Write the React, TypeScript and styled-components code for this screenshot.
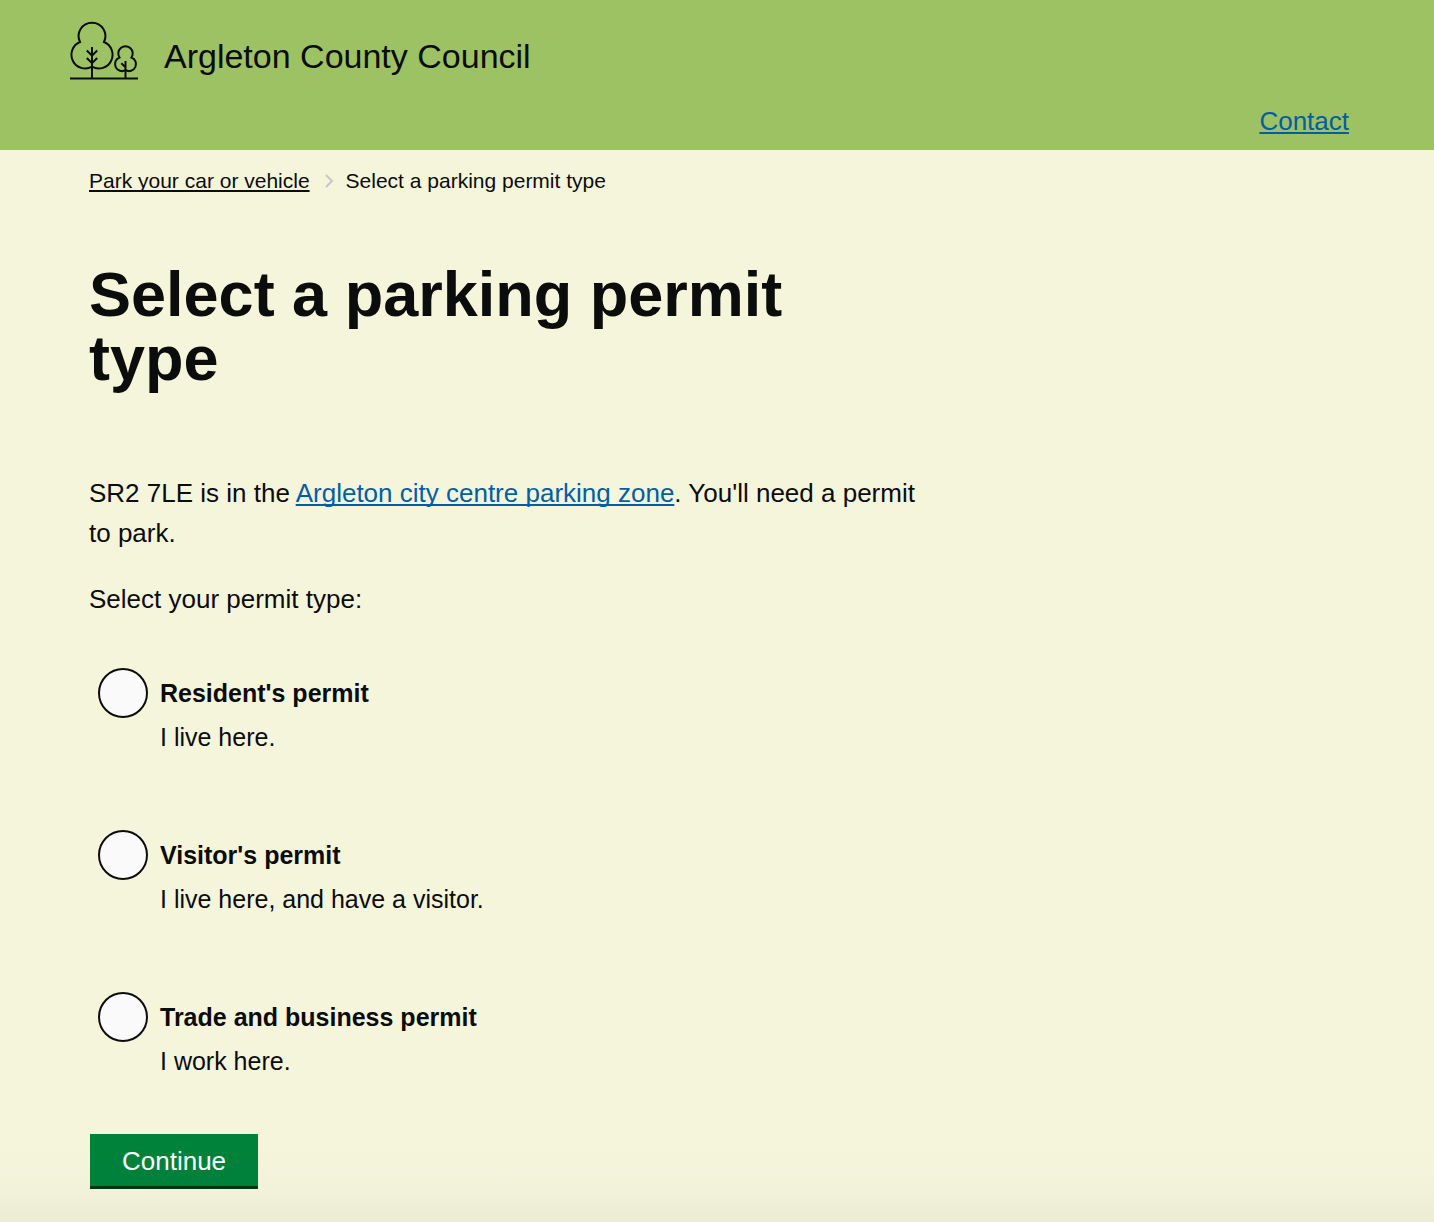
import React, { useState } from "react";
import styled, { createGlobalStyle } from "styled-components";

const GlobalStyle = createGlobalStyle`
  * { box-sizing: border-box; }
  body {
    margin: 0;
    background: #f5f5dc;
    color: #0b0c0c;
    font-family: "Helvetica Neue", "Liberation Sans", Arial, sans-serif;
    font-size: 26px;
    line-height: 40px;
  }
`;

const Page = styled.div`
  display: flex;
  flex-direction: column;
  min-height: 100vh;
`;

const Header = styled.header`
  display: flex;
  flex-direction: column;
  gap: 19px;
  padding: 20px 85px 9px 68px;
  background: #9dc264;
`;

const Brand = styled.a`
  display: flex;
  align-items: center;
  align-self: flex-start;
  gap: 24px;
  color: inherit;
  font-size: 34px;
  text-decoration: none;
`;

const BrandName = styled.span`
  padding-top: 10px;
`;

const Logo = styled.svg`
  display: block;
  width: 72px;
  height: 62px;
`;

const Nav = styled.nav`
  display: flex;
  justify-content: flex-end;
`;

const TextLink = styled.a<{ $plain?: boolean }>`
  color: ${(p) => (p.$plain ? "inherit" : "#005ea5")};
  text-decoration: underline;
  text-decoration-thickness: 2px;
  text-decoration-skip-ink: none;
  text-underline-offset: 2px;
`;

const Main = styled.main`
  flex: 1;
  padding: 16px 89px 32px;
`;

const Breadcrumbs = styled.ol`
  display: flex;
  align-items: center;
  gap: 12px;
  margin: 0;
  padding: 0;
  list-style: none;
  font-size: 21px;
  line-height: 30px;
`;

const Crumb = styled.li`
  display: flex;
  align-items: center;
  gap: 14px;
`;

const Chevron = styled.svg`
  display: block;
  width: 10px;
  height: 16px;
`;

const Title = styled.h1`
  max-width: 820px;
  margin: 66px 0 83px;
  font-size: 63px;
  font-weight: 700;
  line-height: 64px;
`;

const Paragraph = styled.p`
  max-width: 836px;
  margin: 0 0 26px;
`;

const Options = styled.fieldset`
  display: flex;
  flex-direction: column;
  gap: 73px;
  margin: 0;
  padding: 23px 0 0 9px;
  border: 0;
`;

const Legend = styled.legend`
  padding: 0;
  margin: 0 0 26px -9px;
`;

const Option = styled.div`
  display: grid;
  grid-template-columns: 50px 1fr;
  column-gap: 12px;
  align-items: center;
  font-size: 25px;
`;

const Radio = styled.input`
  appearance: none;
  width: 50px;
  height: 50px;
  margin: 0;
  border: 2px solid #0b0c0c;
  border-radius: 50%;
  background: #fafafa;
  cursor: pointer;

  &:checked {
    background: radial-gradient(#0b0c0c 12px, #fafafa 13px);
  }
`;

const OptionLabel = styled.label`
  justify-self: start;
  font-weight: 700;
  cursor: pointer;
`;

const Hint = styled.span`
  grid-column: 2;
  margin-top: -1px;
`;

const Submit = styled.button`
  display: block;
  margin: 53px 0 0 1px;
  padding: 7px 32px 5px;
  border: 0;
  border-bottom: 3px solid #003618;
  background: #00823b;
  color: #fff;
  font: inherit;
  cursor: pointer;
`;

const BottomShade = styled.div`
  height: 80px;
  margin-top: -80px;
  background: linear-gradient(rgba(0, 0, 0, 0), rgba(0, 0, 0, 0.012) 60%, rgba(0, 0, 0, 0.04));
  pointer-events: none;
`;

const permits = [
  { id: "resident", label: "Resident's permit", hint: "I live here." },
  { id: "visitor", label: "Visitor's permit", hint: "I live here, and have a visitor." },
  { id: "trade", label: "Trade and business permit", hint: "I work here." },
];

function TreesLogo() {
  return (
    <Logo viewBox="0 0 72 62" fill="none" stroke="#0b0c0c" strokeWidth="2" aria-hidden="true">
      <path d="M2 58.500H70M24 27V58.500M18.800 30.500L24 35.700L29.200 30.500M18.800 38L24 43.200L29.200 38" />
      <path d="M12 22A13.400 13.400 0 1 1 36 22A13.760 13.760 0 1 1 24 46.700A13.760 13.760 0 1 1 12 22Z" />
      <path d="M57.500 41V58.500M53.300 43.300L57.500 47.300" />
      <path d="M51.500 37.500A7.200 7.200 0 1 1 63.500 37.500A7.040 7.040 0 1 1 57.500 50.200A7.040 7.040 0 1 1 51.500 37.500Z" />
    </Logo>
  );
}

export default function App() {
  const [permit, setPermit] = useState("");

  return (
    <Page>
      <GlobalStyle />
      <Header>
        <Brand href="#">
          <TreesLogo />
          <BrandName>Argleton County Council</BrandName>
        </Brand>
        <Nav aria-label="Site">
          <TextLink href="#contact">Contact</TextLink>
        </Nav>
      </Header>
      <Main>
        <nav aria-label="Breadcrumb">
          <Breadcrumbs>
            <Crumb>
              <TextLink $plain href="#parking">Park your car or vehicle</TextLink>
              <Chevron viewBox="0 0 10 16" fill="none" stroke="#c5c8c8" strokeWidth="2" aria-hidden="true">
                <path d="M2 2L8 8L2 14" />
              </Chevron>
            </Crumb>
            <Crumb aria-current="page">Select a parking permit type</Crumb>
          </Breadcrumbs>
        </nav>
        <Title>Select a parking permit type</Title>
        <Paragraph>
          SR2 7LE is in the <TextLink href="#zone">Argleton city centre parking zone</TextLink>. You'll need a
          permit to park.
        </Paragraph>
        <form onSubmit={(e) => e.preventDefault()}>
          <Options>
            <Legend>Select your permit type:</Legend>
            {permits.map((p) => (
              <Option key={p.id}>
                <Radio
                  type="radio"
                  name="permit"
                  id={p.id}
                  value={p.id}
                  checked={permit === p.id}
                  onChange={() => setPermit(p.id)}
                  aria-describedby={`${p.id}-hint`}
                />
                <OptionLabel htmlFor={p.id}>{p.label}</OptionLabel>
                <Hint id={`${p.id}-hint`}>{p.hint}</Hint>
              </Option>
            ))}
          </Options>
          <Submit type="submit">Continue</Submit>
        </form>
      </Main>
      <BottomShade />
    </Page>
  );
}
